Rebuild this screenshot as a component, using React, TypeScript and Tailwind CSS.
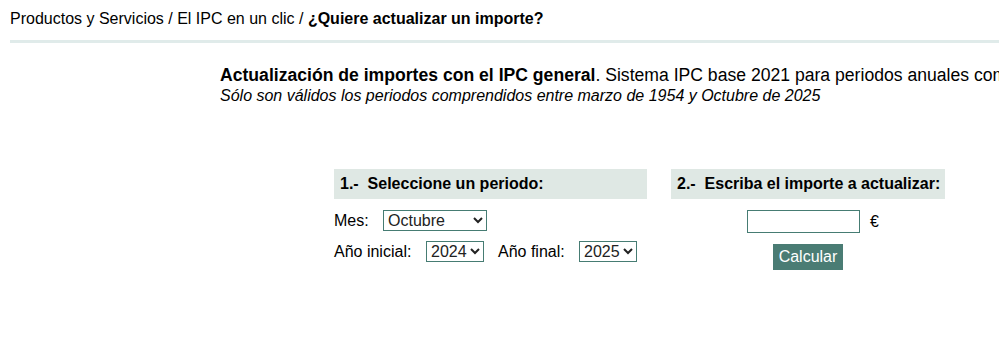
const meses = [
  'Enero', 'Febrero', 'Marzo', 'Abril', 'Mayo', 'Junio',
  'Julio', 'Agosto', 'Septiembre', 'Octubre', 'Noviembre', 'Diciembre',
]

const years = Array.from({ length: 2025 - 1954 + 1 }, (_, i) => 2025 - i)

const selectClassName =
  'h-[21px] border border-[#467c73] bg-white text-[16px] leading-[19px] text-[#222] rounded-none'

const sectionHeaderClassName =
  'flex h-[30px] items-center whitespace-pre bg-[#dfe8e4] px-[6px] text-[16px] font-bold'

export default function App() {
  return (
    <div className="h-[341px] w-[999px] overflow-hidden bg-white font-['Liberation_Sans',Arial,sans-serif] text-black">
      <div className="px-[10px] pt-[9px] text-[16px] leading-[20px]">
        Productos y Servicios / El IPC en un clic / <b>¿Quiere actualizar un importe?</b>
      </div>
      <div className="ml-[10px] mt-[11px] h-[3px] bg-[#e0ebea]" />

      <div className="mt-[22px] whitespace-nowrap pl-[220px] leading-[20px]">
        <p className="text-[17.6px]">
          <b>Actualización de importes con el IPC general</b>. Sistema IPC base 2021 para periodos
          anuales completos
        </p>
        <p className="mt-px text-[16px] italic">
          Sólo son válidos los periodos comprendidos entre marzo de 1954 y Octubre de 2025
        </p>
      </div>

      <div className="mt-[63px] flex gap-[24px] pl-[334px] text-[16px] leading-[20px]">
        <div className="w-[313px]">
          <div className={sectionHeaderClassName}>1.-  Seleccione un periodo:</div>
          <div className="mt-[11px] flex items-center">
            <span className="w-[49px]">Mes:</span>
            <select defaultValue="Octubre" className={`${selectClassName} w-[104px]`}>
              {meses.map((m) => (
                <option key={m}>{m}</option>
              ))}
            </select>
          </div>
          <div className="mt-[10px] flex items-center">
            <span className="w-[92px]">Año inicial:</span>
            <select defaultValue="2024" className={`${selectClassName} w-[58px]`}>
              {years.map((y) => (
                <option key={y}>{y}</option>
              ))}
            </select>
            <span className="ml-[14px] w-[81px]">Año final:</span>
            <select defaultValue="2025" className={`${selectClassName} w-[58px]`}>
              {years.map((y) => (
                <option key={y}>{y}</option>
              ))}
            </select>
          </div>
        </div>

        <div className="w-[274px]">
          <div className={sectionHeaderClassName}>2.-  Escriba el importe a actualizar:</div>
          <div className="mt-[11px] flex items-center justify-center pl-[10px]">
            <input type="text" className="h-[23px] w-[113px] border border-[#467c73] bg-white" />
            <span className="ml-[10px]">€</span>
          </div>
          <div className="mt-[11px] flex justify-center">
            <button
              type="button"
              className="h-[26px] w-[70px] bg-[#4a7c74] text-[16px] text-white"
            >
              Calcular
            </button>
          </div>
        </div>
      </div>
    </div>
  )
}
